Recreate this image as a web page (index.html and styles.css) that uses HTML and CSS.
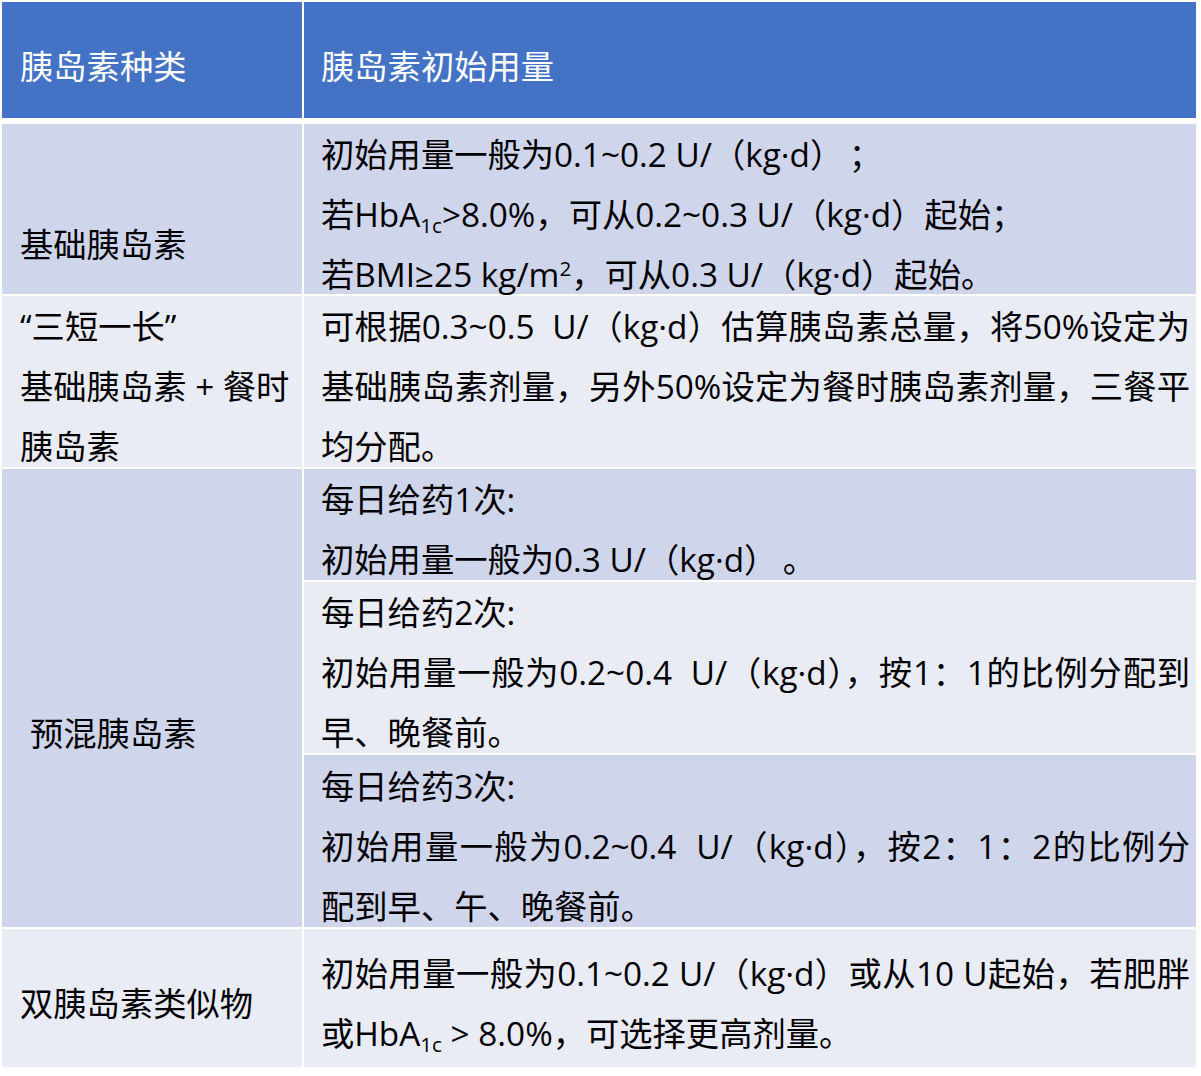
FILE: index.html
```html
<!DOCTYPE html>
<html lang="zh-CN">
<head>
<meta charset="utf-8">
<title>胰岛素初始用量</title>
<link rel="stylesheet" href="styles.css">
</head>
<body>
<div class="sheet">
  <div class="row head-row">
    <div class="cell head left">胰岛素种类</div>
    <div class="cell head right">胰岛素初始用量</div>
  </div>
  <div class="body">
    <div class="cell dark left p-r1l">基础胰岛素</div>
    <div class="cell dark right p-r1r">
      <div class="ln">初始用量一般为0.1~0.2 U/（kg·d）&thinsp;；</div>
      <div class="ln">若HbA<sub>1c</sub>&gt;8.0%，可从0.2~0.3 U/（kg·d）起始；</div>
      <div class="ln">若BMI≥25 kg/m<sup>2</sup>，可从0.3 U/（kg·d）起始。</div>
    </div>

    <div class="cell light left p-r2">
      <div class="ln">“三短一长”</div>
      <div class="ln">基础胰岛素&nbsp;+&nbsp;餐时</div>
      <div class="ln">胰岛素</div>
    </div>
    <div class="cell light right p-r2">
      <div class="ln full">可根据0.3~0.5&nbsp; U/（kg·d）估算胰岛素总量，将50%设定为</div>
      <div class="ln full">基础胰岛素剂量，另外50%设定为餐时胰岛素剂量，三餐平</div>
      <div class="ln">均分配。</div>
    </div>

    <div class="cell dark left premix p-r3l">预混胰岛素</div>
    <div class="cell dark right p-s1">
      <div class="ln">每日给药1次:</div>
      <div class="ln">初始用量一般为0.3 U/（kg·d）&thinsp;。</div>
    </div>
    <div class="cell light right p-s2">
      <div class="ln">每日给药2次:</div>
      <div class="ln full">初始用量一般为0.2~0.4&nbsp; U/（kg·d），按1：1的比例分配到</div>
      <div class="ln">早、晚餐前。</div>
    </div>
    <div class="cell dark right p-s3">
      <div class="ln">每日给药3次:</div>
      <div class="ln full">初始用量一般为0.2~0.4&nbsp; U/（kg·d），按2：1：2的比例分</div>
      <div class="ln">配到早、午、晚餐前。</div>
    </div>

    <div class="cell light left p-r4l">双胰岛素类似物</div>
    <div class="cell light right p-r4r">
      <div class="ln full">初始用量一般为0.1~0.2 U/（kg·d）或从10 U起始，若肥胖</div>
      <div class="ln">或HbA<sub>1c</sub>&nbsp;&gt;&nbsp;8.0%，可选择更高剂量。</div>
    </div>
  </div>
</div>
</body>
</html>
```

FILE: styles.css
```css
html, body {
  margin: 0;
  padding: 0;
  background: #ffffff;
}

body {
  font-family: "Open Sans", "Noto Sans CJK SC", sans-serif;
  font-size: 33.3px;
  line-height: 60px;
  color: #000000;
}

.sheet {
  padding: 2px 0 0 2px;
  width: 1194px;
  display: flex;
  flex-direction: column;
  gap: 6px;
}

.head-row {
  display: grid;
  grid-template-columns: 300px 892px;
  column-gap: 2px;
  height: 116px;
}

.body {
  display: grid;
  grid-template-columns: 300px 892px;
  grid-template-rows: 170px 171px 111px 171px 172px 138px;
  gap: 2px;
}

.cell {
  box-sizing: border-box;
  white-space: nowrap;
  overflow: visible;
}

.cell.left {
  padding-left: 18px;
  padding-right: 4px;
}

.cell.right {
  padding-left: 17px;
  padding-right: 6px;
}

.cell.head {
  background: #4472c4;
  color: #ffffff;
  padding-top: 34px;
}

.dark {
  background: #cfd5ea;
}

.light {
  background: #e9ebf5;
}

.cell.premix {
  grid-row: 3 / span 3;
  padding-left: 28px;
}

.ln {
  height: 60px;
}

.full {
  text-align: justify;
  text-align-last: justify;
}

sub, sup {
  font-size: 0.62em;
  line-height: 0;
}

sub {
  vertical-align: -0.3em;
}

sup {
  vertical-align: 0.55em;
}

.p-r1l { padding-top: 90px; }
.p-r1r { padding-top: 0; }
.p-r2  { padding-top: 0; }
.p-r3l { padding-top: 234px; }
.p-s1  { padding-top: 0; }
.p-s2  { padding-top: 0; }
.p-s3  { padding-top: 1px; }
.p-r4l { padding-top: 44px; }
.p-r4r { padding-top: 14px; }
```
